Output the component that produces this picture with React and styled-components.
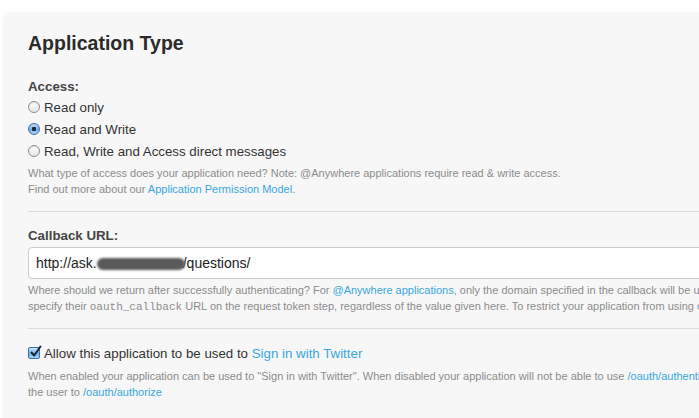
import React from "react";
import styled, { createGlobalStyle } from "styled-components";

const Global = createGlobalStyle`
  html, body { margin: 0; padding: 0; background: #fff; overflow: hidden; }
  body { font-family: "Liberation Sans", Arial, sans-serif; }
`;

const Panel = styled.section`
  margin: 12px 0 0 3px;
  width: 780px;
  height: 420px;
  background: #f7f7f7;
  border-radius: 6px 0 0 0;
  padding: 19px 0 0 25px;
  box-sizing: border-box;
`;

const Title = styled.h2`
  margin: 0 0 24px;
  font-size: 19.5px;
  line-height: 24px;
  font-weight: bold;
  color: #2b2b2b;
`;

const FieldLabel = styled.div`
  font-size: 13.3px;
  line-height: 16px;
  font-weight: bold;
  color: #454545;
  margin-bottom: ${(p) => p.$mb || 0}px;
`;

const OptionRow = styled.label`
  display: flex;
  align-items: center;
  height: 22px;
  font-size: 13.3px;
  color: #333;
  gap: 4px;
`;

const Radio = styled.span`
  width: 12px;
  height: 12px;
  box-sizing: border-box;
  border-radius: 50%;
  border: 1px solid ${(p) => (p.$checked ? "#3d6fa8" : "#8e8e8e")};
  background: ${(p) =>
    p.$checked
      ? "radial-gradient(circle at 50% 50%, #1b2a3a 0 2px, transparent 2.5px), linear-gradient(#cfe6fb, #6fb0ee 55%, #a9d4fa)"
      : "linear-gradient(#ffffff, #e6e6e6)"};
  box-shadow: inset 0 1px 1px rgba(0,0,0,0.12);
  flex: none;
`;

const Help = styled.p`
  margin: ${(p) => p.$mt || 0}px 0 0;
  font-size: 11px;
  line-height: 16px;
  color: #8c8c8c;
  white-space: nowrap;
`;

const Link = styled.a`
  color: #3aa6de;
  text-decoration: none;
`;

const Code = styled.code`
  font-family: "Liberation Mono", "Courier New", monospace;
  font-size: 11px;
`;

const Divider = styled.hr`
  border: 0;
  border-top: 1px solid #dcdcdc;
  margin: ${(p) => p.$mt}px 0 ${(p) => p.$mb}px;
`;

const Input = styled.div`
  height: 32px;
  box-sizing: border-box;
  border: 1px solid #cccccc;
  border-radius: 4px 0 0 4px;
  background: #fff;
  display: flex;
  align-items: center;
  padding-left: 7px;
  font-size: 14px;
  color: #222;
`;

const Redacted = styled.span`
  display: inline-block;
  width: 88px;
  height: 12px;
  margin: 2px -2px 0 0;
  background: #5a5a5a;
  border-radius: 6px;
  filter: blur(1.2px);
`;

const CheckRow = styled.label`
  display: flex;
  align-items: center;
  gap: 4px;
  font-size: 13.3px;
  color: #333;
  height: 18px;
  white-space: nowrap;
`;

const Checkbox = styled.span`
  width: 12px;
  height: 12px;
  box-sizing: border-box;
  border: 1px solid #3d6fa8;
  border-radius: 2px;
  background: linear-gradient(#cfe6fb, #6fb0ee 55%, #a9d4fa);
  position: relative;
  flex: none;
  svg { position: absolute; left: 0px; top: -3px; }
`;

export default function App() {
  return (
    <>
      <Global />
      <Panel>
        <Title>Application Type</Title>
        <FieldLabel $mb={1}>Access:</FieldLabel>
        <OptionRow><Radio />Read only</OptionRow>
        <OptionRow><Radio $checked />Read and Write</OptionRow>
        <OptionRow><Radio />Read, Write and Access direct messages</OptionRow>
        <Help $mt={3}>
          What type of access does your application need? Note: @Anywhere applications require read &amp; write access.
          <br />
          Find out more about our <Link>Application Permission Model</Link>.
        </Help>
        <Divider $mt={14} $mb={16} />
        <FieldLabel $mb={3}>Callback URL:</FieldLabel>
        <Input>http://ask.<Redacted />/questions/</Input>
        <Help $mt={3}>
          Where should we return after successfully authenticating? For <Link>@Anywhere applications</Link>, only the domain specified in the callback will be used. OAuth 1.0a applications should explicitly
          <br />
          specify their <Code>oauth_callback</Code> URL on the request token step, regardless of the value given here. To restrict your application from using callbacks, leave this field blank.
        </Help>
        <Divider $mt={13} $mb={15} />
        <CheckRow>
          <Checkbox>
            <svg width="14" height="14" viewBox="0 0 14 14">
              <path d="M2.5 7.5 L5.2 10.5 L11.5 1.5" fill="none" stroke="#1a2633" strokeWidth="2" strokeLinecap="round" strokeLinejoin="round" />
            </svg>
          </Checkbox>
          <span>Allow this application to be used to <Link>Sign in with Twitter</Link></span>
        </CheckRow>
        <Help $mt={6}>
          When enabled your application can be used to "Sign in with Twitter". When disabled your application will not be able to use <Link>/oauth/authenticate</Link> and must redirect
          <br />
          the user to <Link>/oauth/authorize</Link>
        </Help>
      </Panel>
    </>
  );
}
